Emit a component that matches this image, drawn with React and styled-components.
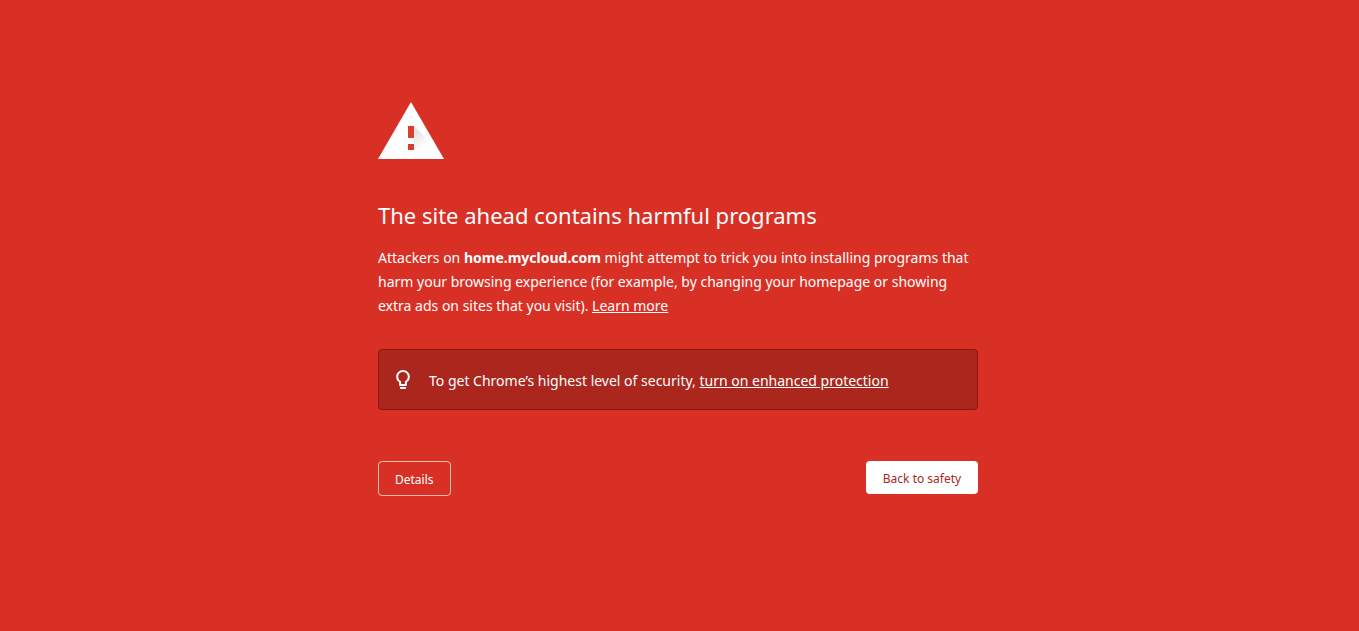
import styled, { createGlobalStyle } from "styled-components";

const GlobalStyle = createGlobalStyle`
  body {
    margin: 0;
    background: #d93025;
    color: #fff;
    font-family: "Noto Sans", "Open Sans", sans-serif;
    font-size: 14px;
    line-height: 24px;
  }
`;

const WarningIcon = () => (
  <svg width="66" height="57" viewBox="0 0 66 57" aria-hidden="true">
    <defs>
      <linearGradient id="shade" x1="30" y1="34" x2="42" y2="48" gradientUnits="userSpaceOnUse">
        <stop offset="0" stopColor="#000" stopOpacity="0.12" />
        <stop offset="1" stopColor="#000" stopOpacity="0" />
      </linearGradient>
    </defs>
    <path d="M33 0 66 57H0z" fill="#fff" />
    <path d="M36 24 49 37 55 57H39L30 48h6V36z" fill="url(#shade)" />
    <path d="M30 24h6v12h-6zM30 42h6v6h-6z" fill="#d93f31" />
  </svg>
);

const BulbIcon = () => (
  <svg width="24" height="24" viewBox="0 0 24 24" fill="#fff" aria-hidden="true">
    <path d="M9 20c0 .5.4 1 1 1h4c.6 0 1-.5 1-1v-1H9v1zm3-18C8.300 2 5.200 5 5.200 8.700c0 2.300 1.100 4.300 2.900 5.500V17c0 .5.4 1 1 1h5.800c.6 0 1-.5 1-1v-2.800c1.800-1.200 2.900-3.200 2.900-5.500C18.800 5 15.700 2 12 2zm2.700 10.700-.8.600V16h-3.800v-2.700l-.8-.6c-1.300-.9-2.100-2.400-2.100-4C7.200 6.100 9.400 4 12 4s4.800 2.100 4.800 4.700c0 1.600-.8 3.100-2.100 4z" />
  </svg>
);

export default function App() {
  return (
    <Page>
      <GlobalStyle />
      <Warning>
        <WarningIcon />
        <Title>The site ahead contains harmful programs</Title>
        <Message>
          Attackers on <strong>home.mycloud.com</strong> might attempt to trick
          you into installing programs that harm your browsing experience (for
          example, by changing your homepage or showing extra ads on sites that
          you visit). <Link href="#learn-more">Learn more</Link>
        </Message>
        <Promo>
          <BulbIcon />
          <p>
            To get Chrome’s highest level of security,{" "}
            <Link href="#enhanced">turn on enhanced protection</Link>
          </p>
        </Promo>
        <Actions>
          <DetailsButton type="button">Details</DetailsButton>
          <SafetyButton type="button">Back to safety</SafetyButton>
        </Actions>
      </Warning>
    </Page>
  );
}

const Page = styled.div`
  padding: 102px 17px 32px 14px;
`;

const Warning = styled.main`
  max-width: 600px;
  margin: 0 auto;

  > svg {
    display: block;
  }
`;

const Title = styled.h1`
  margin: 40px 0 15px;
  font-size: 22px;
  font-weight: 400;
  line-height: 32px;
`;

const Message = styled.p`
  margin: 0;
`;

const Link = styled.a`
  color: inherit;
  text-decoration: underline;
`;

const Promo = styled.div`
  display: flex;
  align-items: center;
  gap: 14px;
  box-sizing: border-box;
  min-height: 61px;
  margin-top: 31px;
  padding: 12px;
  border: 1px solid #8c1510;
  border-radius: 4px;
  background: #ab261d;

  p {
    margin: 0;
    padding-top: 2px;
  }

  svg {
    flex: none;
  }
`;

const Actions = styled.div`
  display: flex;
  flex-wrap: wrap;
  align-items: flex-start;
  justify-content: space-between;
  gap: 12px;
  margin-top: 51px;
`;

const Button = styled.button`
  padding: 9px 16px 7px;
  border: 0;
  border-radius: 4px;
  font-family: inherit;
  font-size: 12px;
  line-height: 17px;
  cursor: pointer;
`;

const DetailsButton = styled(Button)`
  border: 1px solid #f3b9b4;
  background: transparent;
  color: #fff;
`;

const SafetyButton = styled(Button)`
  min-width: 112px;
  background: #fff;
  color: #a52a24;
`;
